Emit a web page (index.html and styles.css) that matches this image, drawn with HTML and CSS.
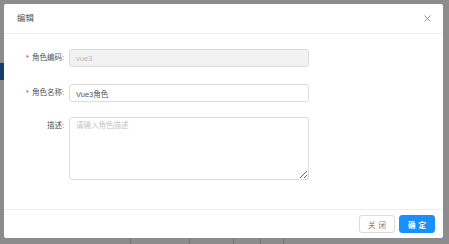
FILE: index.html
```html
<!DOCTYPE html>
<html lang="zh-CN">
<head>
<meta charset="utf-8">
<title>编辑</title>
<link rel="stylesheet" href="styles.css">
</head>
<body>
<div class="page">
  <div class="page-side"></div>
  <div class="page-grid">
    <span></span><span></span><span></span><span></span><span></span>
  </div>
</div>
<div class="mask"></div>
<div class="wrap">
  <div class="dialog">
    <div class="header">
      <span class="title">编辑</span>
      <span class="close" aria-label="关闭">
        <svg width="7" height="7" viewBox="0 0 7 7"><path d="M0.5 0.5L6.5 6.5M6.5 0.5L0.5 6.5" stroke="#8c8c8c" stroke-width="0.9" fill="none"/></svg>
      </span>
    </div>
    <div class="body">
      <div class="row">
        <label class="label req">角色编码:</label>
        <input class="input disabled" value="vue3" disabled>
      </div>
      <div class="row">
        <label class="label req">角色名称:</label>
        <input class="input" value="Vue3角色">
      </div>
      <div class="row row-area">
        <label class="label">描述:</label>
        <textarea class="input area" placeholder="请输入角色描述"></textarea>
      </div>
    </div>
    <div class="footer">
      <button class="btn">关闭</button>
      <button class="btn primary">确定</button>
    </div>
  </div>
</div>
</body>
</html>
```

FILE: styles.css
```css
* { box-sizing: border-box; }
html, body {
  margin: 0;
  width: 449px;
  height: 244px;
  overflow: hidden;
  font-family: "Liberation Sans", "Noto Sans CJK SC", sans-serif;
}
body { position: relative; background: #fff; }

.page { width: 449px; height: 244px; position: relative; }
.page-side {
  position: absolute; left: 0; top: 63px; width: 6px; height: 17px;
  background: #1f6fd0;
}
.page-grid { position: absolute; left: 0; top: 239px; width: 449px; height: 5px; }
.page-grid span { position: absolute; top: 0; width: 1px; height: 5px; background: #cfcfcf; }
.page-grid span:nth-child(1) { left: 130px; }
.page-grid span:nth-child(2) { left: 189px; }
.page-grid span:nth-child(3) { left: 233px; }
.page-grid span:nth-child(4) { left: 260px; }
.page-grid span:nth-child(5) { left: 283px; }

.mask {
  position: absolute; inset: 0;
  background: rgba(0, 0, 0, 0.45);
}
.wrap {
  position: absolute; inset: 0;
  padding: 4px 6px 6px 4px;
  display: flex;
}
.dialog {
  flex: 1;
  background: #fff;
  border-radius: 2px;
  display: flex;
  flex-direction: column;
}
.header {
  height: 30px;
  border-bottom: 1px solid #ededed;
  display: flex;
  align-items: center;
  justify-content: space-between;
  padding: 0 12px 0 13px;
}
.title {
  font-size: 8.5px;
  color: #555;
  line-height: 1;
}
.close { display: flex; width: 7px; height: 7px; }

.body {
  flex: 1;
  padding: 15px 0 0 0;
  display: flex;
  flex-direction: column;
  gap: 17px;
}
.row { display: flex; align-items: flex-start; }
.row-area { margin-top: -2px; }
.label {
  width: 65px;
  text-align: right;
  padding-right: 5px;
  font-size: 7.5px;
  line-height: 18px;
  color: #555;
}
.label.req::before {
  content: "*";
  color: #f5222d;
  margin-right: 3px;
  font-size: 7.5px;
}
.input {
  width: 240px;
  height: 18px;
  border: 1px solid #dcdcdc;
  border-radius: 3px;
  padding: 0 6px;
  font-family: inherit;
  font-size: 7.5px;
  color: #555;
  background: #fff;
  outline: none;
}
.input.disabled {
  background: #f2f2f2;
  color: #bbb;
}
.area {
  height: 63px;
  padding: 3px 6px;
  resize: vertical;
  line-height: 10px;
}
.area::placeholder { color: #c4c4c4; }

.footer {
  height: 29px;
  border-top: 1px solid #ededed;
  display: flex;
  align-items: center;
  justify-content: flex-end;
  gap: 4px;
  padding: 0 8px 0 0;
}
.btn {
  width: 36px;
  height: 18px;
  border: 1px solid #dcdcdc;
  border-radius: 3px;
  background: #fff;
  color: #777;
  font-family: inherit;
  font-size: 7.5px;
  letter-spacing: 3px;
  text-indent: 3px;
  padding: 0;
  margin: 0;
}
.btn.primary {
  background: #1890ff;
  border-color: #1890ff;
  color: #fff;
  font-weight: bold;
}
```
